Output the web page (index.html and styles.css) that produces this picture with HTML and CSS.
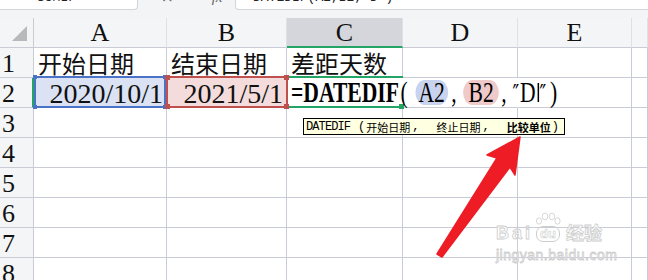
FILE: index.html
```html
<!DOCTYPE html>
<html lang="zh-CN">
<head>
<meta charset="utf-8">
<title>DATEDIF</title>
<link rel="stylesheet" href="styles.css">
</head>
<body>
<div class="app">
  <div class="fbar">
    <div class="namebox"><span>SUMIF</span></div>
    <div class="fx-icons"><span class="ic-x">×</span><span class="ic-ok">✓</span><span class="ic-fx">fx</span></div>
    <div class="formula"><span>DATEDIF(A2,B2,"D")</span></div>
  </div>

  <div class="sheet">
    <div class="ch corner"></div>
    <div class="ch">A</div>
    <div class="ch">B</div>
    <div class="ch sel">C</div>
    <div class="ch">D</div>
    <div class="ch">E</div>
    <div class="ch"></div>

    <div class="rh">1</div>
    <div class="cn">开始日期</div>
    <div class="cn">结束日期</div>
    <div class="cn">差距天数</div>
    <div></div><div></div><div></div>

    <div class="rh act">2</div>
    <div class="num a2">2020/10/1<div class="refbox blue"><i class="h tl"></i><i class="h tr"></i><i class="h bl"></i><i class="h br"></i></div></div>
    <div class="num b2">2021/5/1<div class="refbox red"><i class="h tl"></i><i class="h tr"></i><i class="h bl"></i><i class="h br"></i></div></div>
    <div class="c2">
      <div class="active"><i class="h br"></i></div>
      <div class="edit"><b>=DATEDIF</b><span class="paren">(</span><span class="pill pa">A2</span><span class="comma">,</span><span class="pill pb">B2</span><span class="comma c2b">,</span><span class="q q1">″</span><span>D</span><span class="caret"></span><span class="q q2">″</span><span class="paren2">)</span></div>
    </div>
    <div class="d2"></div><div></div><div></div>

    <div class="rh">3</div><div></div><div></div><div></div><div></div><div></div><div></div>
    <div class="rh">4</div><div></div><div></div><div></div><div></div><div></div><div></div>
    <div class="rh">5</div><div></div><div></div><div></div><div></div><div></div><div></div>
    <div class="rh">6</div><div></div><div></div><div></div><div></div><div></div><div></div>
    <div class="rh">7</div><div></div><div></div><div></div><div></div><div></div><div></div>
    <div class="rh">8</div><div></div><div></div><div></div><div></div><div></div><div></div>
  </div>

  <div class="tip"><span class="tfn">DATEDIF</span><span class="tpar">(</span><span class="tcn">开始日期</span><span class="tcm">,</span><span class="tcn">终止日期</span><span class="tcm">,</span><b class="tcn">比较单位</b><span class="tpar2">)</span></div>

  <div class="wm">
    <div class="wm1"><span class="bai">Bai</span><span class="paw"><svg width="28" height="14" viewBox="0 0 28 14"><ellipse cx="5" cy="9" rx="2.6" ry="3.2"/><ellipse cx="11" cy="4.5" rx="2.8" ry="3.4"/><ellipse cx="18" cy="4.5" rx="2.8" ry="3.4"/><ellipse cx="23.5" cy="9" rx="2.6" ry="3.2"/></svg><span class="du">du</span></span><span class="jy">经验</span></div>
    <div class="wm2">jingyan.baidu.com</div>
  </div>

  <svg class="arrow" width="648" height="280" viewBox="0 0 648 280">
    <polygon points="520,137 487,155 497,158 437,254 442,257 510,167 515,175" fill="#ee1c25" stroke="#ee1c25" stroke-width="1.5" stroke-linejoin="round"/>
  </svg>
</div>
</body>
</html>
```

FILE: styles.css
```css
html, body {
  margin: 0;
  padding: 0;
}
body {
  width: 648px;
  height: 280px;
  overflow: hidden;
  background: #f3f4f6;
  font-family: "Liberation Serif", "Noto Sans CJK SC", serif;
  color: #111;
}
.app {
  position: relative;
  width: 648px;
  height: 280px;
  overflow: hidden;
}

/* formula bar */
.fbar {
  display: flex;
  align-items: flex-start;
  height: 18px;
  background: #f3f4f6;
}
.namebox {
  box-sizing: border-box;
  width: 138px;
  height: 10px;
  background: #fff;
  border-right: 1px solid #d3d5db;
  border-bottom: 1px solid #d3d5db;
  border-bottom-right-radius: 4px;
  padding-left: 37px;
  overflow: hidden;
  font: 13px/13px "Liberation Mono", monospace;
  color: #222;
}
.namebox span, .formula span {
  display: block;
  margin-top: -9px;
}
.fx-icons {
  width: 97px;
  height: 9px;
  overflow: hidden;
  display: flex;
  align-items: flex-start;
  color: #666;
  font: 15px/15px "DejaVu Sans", sans-serif;
}
.fx-icons span { display: block; margin-top: -10px; }
.ic-x { margin-left: 23px; }
.ic-ok { margin-left: 16px; font-size: 12px; }
.ic-fx { margin-left: 12px; font: italic 15px/15px "Liberation Serif", serif; }
.formula {
  flex: 1;
  box-sizing: border-box;
  height: 10px;
  background: #fff;
  border-left: 1px solid #d3d5db;
  border-bottom: 1px solid #d3d5db;
  border-bottom-left-radius: 4px;
  padding-left: 17px;
  overflow: hidden;
  font: 13px/13px "Liberation Mono", monospace;
  color: #222;
}

/* sheet grid */
.sheet {
  display: grid;
  grid-template-columns: 34px 133px 120px 116px 115px 114px 1fr;
  grid-auto-rows: 30px;
}
.sheet > div {
  box-sizing: border-box;
  position: relative;
  background: #fff;
  border-right: 1px solid #c9ccd7;
  border-bottom: 1px solid #c9ccd7;
  white-space: nowrap;
}
.sheet > .ch {
  background: #f4f5f7;
  border-right-color: #dfe1e6;
  text-align: center;
  font-size: 26px;
  line-height: 29px;
  color: #111;
}
.sheet > .ch.sel {
  background: #d4d6dc;
  border-bottom: 2px solid #22a565;
}
.sheet > .corner {
  border-right-color: #c9ccd7;
}
.corner::after {
  content: "";
  position: absolute;
  left: 12px;
  top: 8px;
  width: 15px;
  height: 15px;
  background: #b9b9b9;
  clip-path: polygon(100% 0, 100% 100%, 0 100%);
}
.sheet > .rh {
  background: #f4f5f7;
  font-size: 26px;
  line-height: 29px;
  padding: 1px 0 0 2px;
  color: #111;
}
.sheet > .rh.act {
  border-right: 2px solid #22a565;
}
.sheet > .cn {
  font: 24px/29px "Noto Sans CJK SC", sans-serif;
  padding-left: 4px;
  color: #111;
}
.sheet > .num {
  text-align: right;
  padding: 1px 3px 0 0;
  font-size: 28px;
  line-height: 29px;
  color: #111;
}
.sheet > .a2 { background: #dae2f4; }
.sheet > .b2 { background: #f3dcdb; }
.sheet > .c2, .sheet > .d2 { border-right-color: #fff; }

.refbox {
  position: absolute;
  top: -2px;
  bottom: -1px;
  z-index: 2;
}
.refbox.blue {
  left: 0;
  right: 0;
  border: 2px solid #4a72c6;
}
.refbox.red {
  left: -1px;
  right: -2px;
  border: 2px solid #c0504d;
}
.h {
  position: absolute;
  width: 5px;
  height: 5px;
}
.blue .h { background: #4a72c6; width: 4px; height: 4px; }
.red .h { background: #c0504d; }
.h.tl { left: -3px; top: -3px; }
.h.tr { right: -3px; top: -3px; }
.h.bl { left: -3px; bottom: -3px; }
.h.br { right: -3px; bottom: -3px; }

.active {
  position: absolute;
  top: -2px;
  bottom: -1px;
  left: 2px;
  right: -1px;
  border-top: 2px solid #22a565;
  border-bottom: 2px solid #22a565;
  z-index: 1;
}
.active .h { background: #22a565; right: -1px; bottom: -3px; }

.edit {
  position: absolute;
  left: 4px;
  top: 0;
  z-index: 3;
  display: flex;
  align-items: baseline;
  font: 29px/29px "Liberation Serif", serif;
  color: #000;
  transform: scaleX(0.745);
  transform-origin: left top;
}
.edit b { font-weight: 700; }
.paren { margin-left: 2px; }
.pill {
  display: inline-block;
  line-height: 25px;
  border-radius: 13px;
}
.pa { background: #c8d4ef; margin-left: 10px; padding: 0 4.5px; }
.pb { background: #efcac9; margin-left: 9px; padding: 0 7px; }
.comma { margin-left: 4px; }
.c2b { margin-left: 3px; }
.q { font-family: "DejaVu Serif", serif; font-size: 24px; }
.q1 { margin-left: 8px; width: 10px; display: inline-block; }
.q2 { width: 14px; display: inline-block; margin-left: 1px; }
.caret {
  display: inline-block;
  width: 1.4px;
  height: 19px;
  background: #000;
  margin-left: 3px;
}
.paren2 { margin-left: 0; }

/* tooltip */
.tip {
  position: absolute;
  left: 303px;
  top: 118px;
  width: 262px;
  height: 17px;
  box-sizing: border-box;
  border: 1px solid #000;
  background: #ffffe1;
  display: flex;
  align-items: center;
  padding-left: 2px;
  white-space: nowrap;
  z-index: 4;
  color: #000;
}
.tfn {
  font: 12px/14px "Liberation Mono", monospace;
  letter-spacing: -0.9px;
}
.tpar { font: 12px/14px "Liberation Mono", monospace; margin-left: 8px; }
.tpar2 { font: 12px/14px "Liberation Mono", monospace; margin-left: 1px; }
.tcn {
  font: 11px/14px "Noto Sans CJK SC", sans-serif;
  margin-left: 1px;
}
b.tcn { font-weight: 700; }
.tcm {
  font: 12px/14px "Liberation Mono", monospace;
  margin-left: 2px;
  margin-right: 16px;
}

/* watermark */
.wm {
  position: absolute;
  left: 496px;
  top: 210px;
  z-index: 2;
  color: rgba(255, 255, 255, 0.85);
  -webkit-text-stroke: 0.8px #cdcdcd;
}
.wm1 {
  display: flex;
  align-items: flex-end;
  height: 32px;
}
.bai {
  font: 700 18px/18px "Liberation Sans", sans-serif;
  letter-spacing: 3px;
}
.paw {
  display: flex;
  flex-direction: column;
  align-items: center;
  width: 30px;
}
.paw svg ellipse {
  fill: rgba(255, 255, 255, 0.85);
  stroke: #cdcdcd;
  stroke-width: 0.8;
}
.du {
  font: 700 13px/14px "Liberation Sans", sans-serif;
  border: 1px solid #cdcdcd;
  border-radius: 7px;
  padding: 0 3px;
  -webkit-text-stroke: 0.6px #cdcdcd;
}
.jy {
  font: 700 18px/20px "Noto Sans CJK SC", sans-serif;
  margin-left: 3px;
}
.wm2 {
  margin-top: 6px;
  font: 14px/14px "Liberation Sans", sans-serif;
  letter-spacing: 0.5px;
}

.arrow {
  position: absolute;
  left: 0;
  top: 0;
  z-index: 5;
  pointer-events: none;
}
```
